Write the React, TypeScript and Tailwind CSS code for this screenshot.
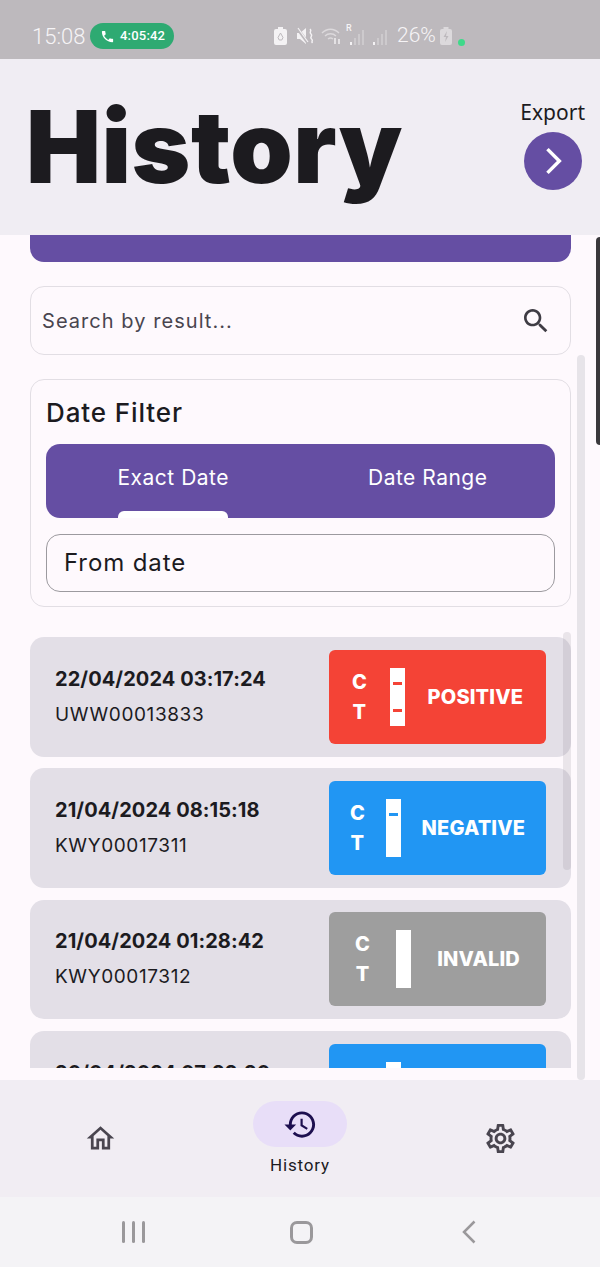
import React from 'react';

const FONT = "font-['Inter','Noto_Sans',sans-serif]";

const ICONS = {
  search:
    'M15.5 14h-.79l-.28-.27C15.41 12.59 16 11.11 16 9.5 16 5.91 13.09 3 9.5 3S3 5.91 3 9.5 5.91 16 9.5 16c1.61 0 3.09-.59 4.23-1.57l.27.28v.79l5 4.99L20.49 19l-4.99-5zm-6 0C7.01 14 5 11.99 5 9.5S7.01 5 9.5 5 14 7.01 14 9.5 11.99 14 9.5 14z',
  home: 'M12 5.69l5 4.5V18h-2v-6H9v6H7v-7.81l5-4.5M12 3L2 12h3v8h6v-6h2v6h6v-8h3L12 3z',
  history:
    'M13 3c-4.97 0-9 4.03-9 9H1l3.89 3.89.07.14L9 12H6c0-3.87 3.13-7 7-7s7 3.13 7 7-3.13 7-7 7c-1.93 0-3.68-.79-4.94-2.06l-1.42 1.42C8.27 19.99 10.51 21 13 21c4.97 0 9-4.03 9-9s-4.03-9-9-9zm-1 5v5l4.28 2.54.72-1.21-3.5-2.08V8H12z',
  settings:
    'M19.43 12.98c.04-.32.07-.64.07-.98 0-.34-.03-.66-.07-.98l2.11-1.65c.19-.15.24-.42.12-.64l-2-3.46c-.09-.16-.26-.25-.44-.25-.06 0-.12.01-.17.03l-2.49 1c-.52-.4-1.08-.73-1.69-.98l-.38-2.65C14.46 2.18 14.25 2 14 2h-4c-.25 0-.46.18-.49.42l-.38 2.65c-.61.25-1.17.59-1.69.98l-2.49-1c-.06-.02-.12-.03-.18-.03-.17 0-.34.09-.43.25l-2 3.46c-.13.22-.07.49.12.64l2.11 1.65c-.04.32-.07.65-.07.98 0 .33.03.66.07.98l-2.11 1.65c-.19.15-.24.42-.12.64l2 3.46c.09.16.26.25.44.25.06 0 .12-.01.17-.03l2.49-1c.52.4 1.08.73 1.69.98l.38 2.65c.03.24.24.42.49.42h4c.25 0 .46-.18.49-.42l.38-2.65c.61-.25 1.17-.59 1.69-.98l2.49 1c.06.02.12.03.18.03.17 0 .34-.09.43-.25l2-3.46c.12-.22.07-.49-.12-.64l-2.11-1.65zm-1.98-1.71c.04.31.05.52.05.73 0 .21-.02.43-.05.73l-.14 1.13.89.7 1.08.84-.7 1.21-1.27-.51-1.04-.42-.9.68c-.43.32-.84.56-1.25.73l-1.06.43-.16 1.13-.2 1.35h-1.4l-.19-1.35-.16-1.13-1.06-.43c-.43-.18-.83-.41-1.23-.71l-.91-.7-1.06.43-1.27.51-.7-1.21 1.08-.84.89-.7-.14-1.13c-.03-.31-.05-.54-.05-.74s.02-.43.05-.73l.14-1.13-.89-.7-1.08-.84.7-1.21 1.27.51 1.04.42.9-.68c.43-.32.84-.56 1.25-.73l1.06-.43.16-1.13.2-1.35h1.39l.19 1.35.16 1.13 1.06.43c.43.18.83.41 1.23.71l.91.7 1.06-.43 1.27-.51.7 1.21-1.07.85-.89.7.14 1.13zM12 8c-2.21 0-4 1.79-4 4s1.79 4 4 4 4-1.79 4-4-1.79-4-4-4zm0 6c-1.1 0-2-.9-2-2s.9-2 2-2 2 .9 2 2-.9 2-2 2z',
};

const MaterialIcon = ({ d, className }: { d: string; className: string }) => (
  <svg viewBox="0 0 24 24" fill="currentColor" className={className}>
    <path d={d} />
  </svg>
);

const SignalBars = ({ className }: { className: string }) => (
  <svg viewBox="0 0 15 16" className={className} fill="#cdcacd">
    <rect x="0" y="13" width="2" height="3" fill="#f4f2f4" />
    <rect x="4" y="9" width="2" height="7" />
    <rect x="8" y="5" width="2" height="11" />
    <rect x="12" y="1" width="2" height="15" />
  </svg>
);

const StatusBar = () => (
  <div className="h-[59px] shrink-0 bg-[#bdb9bd] flex items-center pl-[32px] pt-[13px] text-[#f6f4f6] font-['Roboto',sans-serif]">
    <span className="text-[22px] font-light w-[58px]">15:08</span>
    <div className="w-[84px] h-[26px] rounded-full bg-[#2eaa72] flex items-center pl-[10px] gap-[5px] text-white">
      <svg viewBox="0 0 24 24" fill="currentColor" className="w-[15px] h-[15px]">
        <path d="M6.6 10.8c1.4 2.8 3.8 5.1 6.6 6.6l2.2-2.2c.3-.3.7-.4 1-.2 1.1.4 2.3.6 3.6.6.6 0 1 .4 1 1V20c0 .6-.4 1-1 1C10.6 21 3 13.4 3 4c0-.6.4-1 1-1h3.5c.6 0 1 .4 1 1 0 1.3.2 2.5.6 3.6.1.3 0 .7-.2 1l-2.3 2.2z" />
      </svg>
      <span className="text-[13px] font-medium tracking-[0.2px]">4:05:42</span>
    </div>
    {/* system tray */}
    <div className="ml-[100px] flex items-center">
      <svg viewBox="0 0 13 18" className="w-[13px] h-[18px]">
        <path d="M4 0h5v2h2a2 2 0 0 1 2 2v12a2 2 0 0 1-2 2H2a2 2 0 0 1-2-2V4a2 2 0 0 1 2-2h2z" fill="#f4f2f4" />
        <path d="M6.5 6l2.5 4.5-1.2 2.5H5.2L4 10.5z" fill="none" stroke="#bdb9bd" strokeWidth="1" />
      </svg>
      <svg viewBox="0 0 18 18" className="w-[18px] h-[18px] ml-[10px]">
        <path d="M0 6h3l6-5v16l-6-5H0z" fill="#f4f2f4" />
        <path d="M0 1l11 15" stroke="#bdb9bd" strokeWidth="3" />
        <path d="M1 1l10 14" stroke="#f4f2f4" strokeWidth="1.200" />
        <path d="M13 2c2.500 2-1.500 3 1 5s-2 3 .5 5-1 2 1 4" fill="none" stroke="#f4f2f4" strokeWidth="1.500" />
      </svg>
      <svg viewBox="0 0 22 18" className="w-[22px] h-[18px] ml-[6px]" fill="none" stroke="#dcd9dc" strokeWidth="1.400">
        <path d="M1 6c5-5 12-5 17 0M4 9c3-3 8-3 11 0M7 12c2-1.500 3-1.500 5 0" />
        <path d="M14 11v6M18 17v-5" stroke="#f4f2f4" />
      </svg>
      <div className="ml-[3px] relative w-[19px] h-[22px]">
        <span className="absolute left-0 -top-[3px] text-[9px] font-medium">R</span>
        <SignalBars className="absolute left-[4px] bottom-[2px] w-[15px] h-[16px]" />
      </div>
      <SignalBars className="w-[15px] h-[16px] ml-[8px] mt-[2px]" />
      <span className="text-[21px] font-light ml-[9px] w-[43px]">26%</span>
      <svg viewBox="0 0 12 18" className="w-[12px] h-[18px]">
        <path d="M3.500 0h5v2H10a2 2 0 0 1 2 2v12a2 2 0 0 1-2 2H2a2 2 0 0 1-2-2V4a2 2 0 0 1 2-2h1.500z" fill="#dcd9dc" />
        <path d="M7 4L3.500 10H6l-1 5 3.500-6H6z" fill="#bdb9bd" />
      </svg>
      <div className="w-[7px] h-[7px] rounded-full bg-[#3fd98a] ml-[6px] mt-[12px]" />
    </div>
  </div>
);

type Result = {
  date: string;
  code: string;
  label: string;
  bg: string;
  mark: string;
  lines: 'both' | 'control' | 'none';
};

const RESULTS: Result[] = [
  { date: '22/04/2024 03:17:24', code: 'UWW00013833', label: 'POSITIVE', bg: 'bg-[#f44336]', mark: 'bg-[#f44336]', lines: 'both' },
  { date: '21/04/2024 08:15:18', code: 'KWY00017311', label: 'NEGATIVE', bg: 'bg-[#2196f3]', mark: 'bg-[#2196f3]', lines: 'control' },
  { date: '21/04/2024 01:28:42', code: 'KWY00017312', label: 'INVALID', bg: 'bg-[#9e9e9e]', mark: 'bg-[#9e9e9e]', lines: 'none' },
  { date: '20/04/2024 07:22:20', code: 'KWY00017310', label: 'NEGATIVE', bg: 'bg-[#2196f3]', mark: 'bg-[#2196f3]', lines: 'control' },
];

const ResultRow = ({ item }: { item: Result }) => (
  <div className="h-[119.5px] shrink-0 rounded-[14px] bg-[#e3dfe7] flex items-center justify-between pl-[25px] pr-[25px]">
    <div className="text-[#1c1b1f]">
      <div className="text-[20px] font-bold leading-[26px] tracking-[0.07px]">{item.date}</div>
      <div className="text-[19px] leading-[26px] mt-[10px] tracking-[0.6px]">{item.code}</div>
    </div>
    <div className={`${item.bg} w-[217px] h-[94px] rounded-[6px] flex items-center justify-evenly text-white font-extrabold`}>
      <div className="flex flex-col items-center text-[20px] leading-[30px]">
        <span>C</span>
        <span>T</span>
      </div>
      <div className="w-[15px] h-[58px] bg-white flex flex-col items-center justify-between py-[14px]">
        <div className={`w-[9px] h-[3px] ${item.lines !== 'none' ? item.mark : ''}`} />
        <div className={`w-[9px] h-[3px] ${item.lines === 'both' ? item.mark : ''}`} />
      </div>
      <span className="text-[20px] tracking-[0.15px]">{item.label}</span>
    </div>
  </div>
);

const App: React.FC = () => {
  return (
    <div className={`${FONT} w-[600px] h-[1267px] flex flex-col overflow-hidden bg-[#fef9fd] text-[#1c1b1f]`}>
      <StatusBar />

      {/* Header */}
      <header className="h-[176px] shrink-0 bg-[#f0edf3] flex items-start justify-between pl-[26px] pr-[15px]">
        <h1 className="text-[100px] font-black leading-[110px] mt-[33px] tracking-[0.5px] text-[#1c1b1f]">History</h1>
        <div className="flex flex-col items-center mt-[38px]">
          <span className="text-[21px] leading-[30px] font-['Noto_Sans',sans-serif]">Export</span>
          <button className="w-[58px] h-[58px] mt-[5px] rounded-full bg-[#654ea3] flex items-center justify-center text-white">
            <svg viewBox="0 0 24 24" fill="none" stroke="currentColor" strokeWidth="2.200" className="w-[38px] h-[38px]">
              <path d="M8.500 4.500L16 12l-7.500 7.500" />
            </svg>
          </button>
        </div>
      </header>

      <main className="relative h-[845px] shrink-0 pl-[30px] pr-[29px] overflow-hidden">
        <div className="h-[27px] rounded-b-[14px] bg-[#654ea3]" />

        <div className="mt-[24px] h-[69px] rounded-[14px] border-[1.5px] border-[#e2dee4] flex items-center justify-between pl-[11px] pr-[18px]">
          <span className="text-[20px] text-[#49454f] tracking-[1.05px]">Search by result...</span>
          <MaterialIcon d={ICONS.search} className="w-[32px] h-[32px] text-[#3f3c44]" />
        </div>

        <section className="mt-[24px] h-[228px] rounded-[14px] border-[1.5px] border-[#e2dee4] px-[15px] pt-[17px]">
          <h2 className="text-[26px] leading-[32px] font-medium tracking-[0.9px]">Date Filter</h2>
          <div className="mt-[15px] h-[74px] rounded-[14px] bg-[#654ea3] overflow-hidden grid grid-cols-2 text-white text-[21px] tracking-[0.5px]">
            <div className="flex flex-col items-center justify-between pt-[20px]">
              <span className="leading-[28px]">Exact Date</span>
              <div className="w-[110px] h-[7px] rounded-t-[6px] bg-white" />
            </div>
            <div className="flex flex-col items-center pt-[20px]">
              <span className="leading-[28px]">Date Range</span>
            </div>
          </div>
          <div className="mt-[16px] h-[58px] rounded-[14px] border-[1.5px] border-[#9c9a9f] flex items-center pl-[17px] text-[24px] tracking-[0.9px]">
            From date
          </div>
        </section>

        <div className="mt-[30px] h-[431px] overflow-hidden flex flex-col gap-[11.8px]">
          {RESULTS.map((item) => (
            <ResultRow key={item.date} item={item} />
          ))}
        </div>

        {/* scrollbars */}
        <div className="absolute left-[563px] top-[397px] w-[8px] h-[238px] rounded-full bg-[#79747e]/15" />
        <div className="absolute left-[577px] top-[120px] w-[8px] h-[725px] rounded-full bg-[#e7e4e9]" />
        <div className="absolute left-[596px] top-[2px] w-[6px] h-[208px] rounded-l-[4px] bg-[#3a383c]" />
      </main>

      {/* Bottom navigation */}
      <nav className="h-[117px] shrink-0 bg-[#f1edf3] grid grid-cols-3">
        <div className="flex items-center justify-center text-[#49454f]">
          <MaterialIcon d={ICONS.home} className="w-[33px] h-[33px]" />
        </div>
        <div className="flex flex-col items-center pt-[21px]">
          <div className="w-[94px] h-[46px] rounded-full bg-[#e8def8] flex items-center justify-center text-[#1d0f4f]">
            <MaterialIcon d={ICONS.history} className="w-[35px] h-[35px]" />
          </div>
          <span className="mt-[6px] text-[17px] leading-[24px] font-normal tracking-[0.85px] font-['Roboto',sans-serif]">History</span>
        </div>
        <div className="flex items-center justify-center text-[#49454f]">
          <MaterialIcon d={ICONS.settings} className="w-[35px] h-[35px]" />
        </div>
      </nav>

      {/* Android navigation */}
      <div className="h-[70px] shrink-0 bg-[#f4f3f6] grid grid-cols-3 text-[#9a989b]">
        <div className="flex justify-center items-center gap-[7px] pl-[67px]">
          <div className="w-[3px] h-[22px] bg-current rounded-full" />
          <div className="w-[3px] h-[22px] bg-current rounded-full" />
          <div className="w-[3px] h-[22px] bg-current rounded-full" />
        </div>
        <div className="flex justify-center items-center pl-[3px]">
          <div className="w-[23px] h-[23px] rounded-[7px] border-[3px] border-current" />
        </div>
        <div className="flex items-center pl-[62px]">
          <svg viewBox="0 0 14 24" fill="none" stroke="currentColor" strokeWidth="2.500" className="w-[14px] h-[24px]">
            <path d="M12.500 1.500L2 12l10.500 10.500" />
          </svg>
        </div>
      </div>
    </div>
  );
};

export default App;
